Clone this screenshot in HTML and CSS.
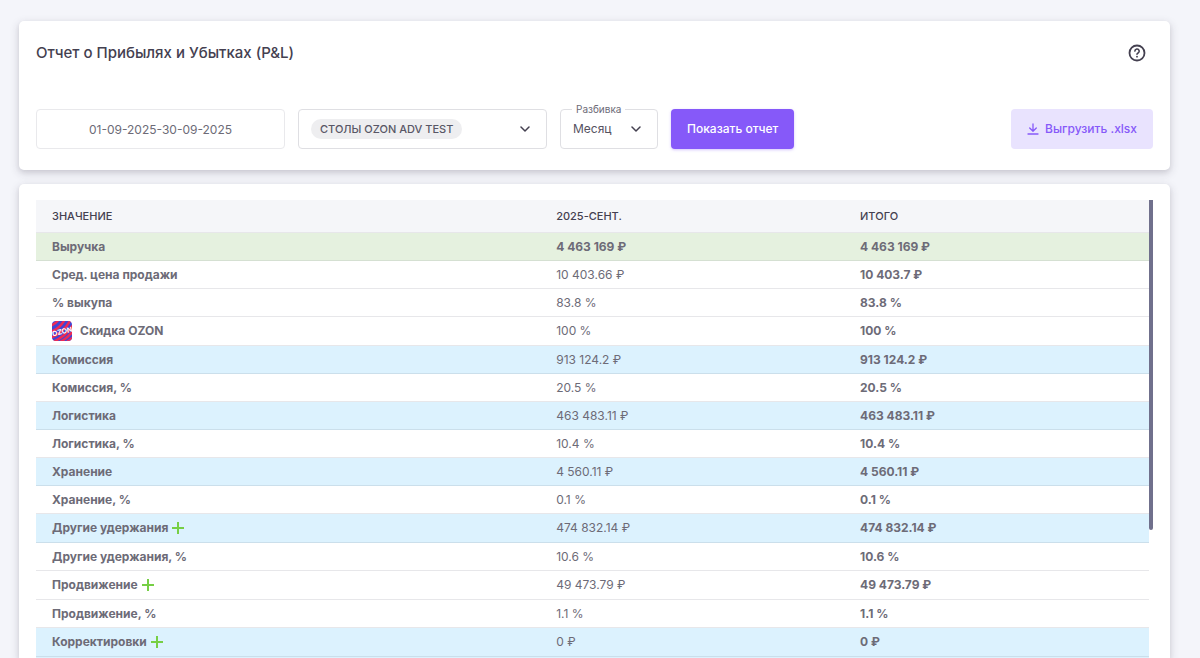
FILE: index.html
```html
<!DOCTYPE html>
<html lang="ru">
<head>
<meta charset="utf-8">
<meta name="viewport" content="width=device-width, initial-scale=1">
<title>Отчет о Прибылях и Убытках (P&amp;L)</title>
<link rel="stylesheet" href="styles.css">
</head>
<body>
<main class="page">
  <section class="card filters">
    <header class="card-head">
      <h1 class="title">Отчет о Прибылях и Убытках (P&amp;L)</h1>
      <button class="help" type="button" aria-label="Справка">
        <svg width="20" height="20" viewBox="0 0 20 20" fill="none" stroke="currentColor" stroke-width="1.8" stroke-linecap="round" stroke-linejoin="round"><circle cx="10" cy="10" r="7.5"/><path d="M7.9 8.1a2.15 2.15 0 1 1 3.2 1.9c-.7.4-1.1.7-1.1 1.3" stroke-width="1.6"/><path d="M10 13.6v.1"/></svg>
      </button>
    </header>
    <form class="controls">
      <input class="field date" type="text" value="01-09-2025-30-09-2025" aria-label="Период">
      <button class="field account" type="button" aria-haspopup="listbox" aria-label="Кабинет: СТОЛЫ OZON ADV TEST">
        <span class="chip">СТОЛЫ OZON ADV TEST</span>
        <svg class="chevron" width="10" height="6" viewBox="0 0 10 6"><path d="M1 1l4 4 4-4"/></svg>
      </button>
      <div class="split">
        <label class="split-label" for="split">Разбивка</label>
        <select class="field split-select" id="split"><option>Месяц</option></select>
        <svg class="chevron split-chevron" width="10" height="6" viewBox="0 0 10 6"><path d="M1 1l4 4 4-4"/></svg>
      </div>
      <button class="btn btn-primary" type="button">Показать отчет</button>
      <button class="btn btn-tonal" type="button">
        <svg width="12" height="12" viewBox="0 0 12 12" fill="none" stroke="currentColor" stroke-width="1.3" stroke-linecap="round" stroke-linejoin="round"><path d="M6 1v7.3M2.7 5L6 8.3 9.300 5M1 11h10"/></svg>
        Выгрузить .xlsx
      </button>
    </form>
  </section>

  <section class="card report">
    <div class="scroll">
      <table class="pnl">
        <thead>
          <tr><th class="col-name" scope="col">Значение</th><th class="col-month" scope="col">2025-сент.</th><th scope="col">Итого</th></tr>
        </thead>
        <tbody>
          <tr class="green"><th scope="row">Выручка</th><td>4 463 169 ₽</td><td>4 463 169 ₽</td></tr>
          <tr><th scope="row">Сред. цена продажи</th><td>10 403.66 ₽</td><td>10 403.7 ₽</td></tr>
          <tr><th scope="row">% выкупа</th><td>83.8 %</td><td>83.8 %</td></tr>
          <tr><th scope="row"><span class="brand">
            <svg width="20" height="20" viewBox="0 0 20 20" aria-hidden="true">
              <defs><clipPath id="tile"><rect width="20" height="20" rx="4"/></clipPath></defs>
              <g clip-path="url(#tile)">
                <rect width="20" height="20" fill="#3f46d6"/>
                <path d="M-2 5Q4 3 7-2M-2 11Q8 8 13-2M-2 17Q12 12 19-2M-1 22Q15 15 23 1M6 22Q17 17 23 7M13 22Q19 19 23 14" fill="none" stroke="#ee2a55" stroke-width="2.500"/>
                <text class="brand-text" x="10" y="13" text-anchor="middle" transform="rotate(-14 10 10)">OZON</text>
              </g>
            </svg>Скидка OZON</span></th><td>100 %</td><td>100 %</td></tr>
          <tr class="blue"><th scope="row">Комиссия</th><td>913 124.2 ₽</td><td>913 124.2 ₽</td></tr>
          <tr><th scope="row">Комиссия, %</th><td>20.5 %</td><td>20.5 %</td></tr>
          <tr class="blue"><th scope="row">Логистика</th><td>463 483.11 ₽</td><td>463 483.11 ₽</td></tr>
          <tr><th scope="row">Логистика, %</th><td>10.4 %</td><td>10.4 %</td></tr>
          <tr class="blue"><th scope="row">Хранение</th><td>4 560.11 ₽</td><td>4 560.11 ₽</td></tr>
          <tr><th scope="row">Хранение, %</th><td>0.1 %</td><td>0.1 %</td></tr>
          <tr class="blue"><th scope="row"><span class="group">Другие удержания<button class="expand" type="button" aria-label="Раскрыть: Другие удержания"></button></span></th><td>474 832.14 ₽</td><td>474 832.14 ₽</td></tr>
          <tr><th scope="row">Другие удержания, %</th><td>10.6 %</td><td>10.6 %</td></tr>
          <tr><th scope="row"><span class="group">Продвижение<button class="expand" type="button" aria-label="Раскрыть: Продвижение"></button></span></th><td>49 473.79 ₽</td><td>49 473.79 ₽</td></tr>
          <tr><th scope="row">Продвижение, %</th><td>1.1 %</td><td>1.1 %</td></tr>
          <tr class="blue"><th scope="row"><span class="group">Корректировки<button class="expand" type="button" aria-label="Раскрыть: Корректировки"></button></span></th><td>0 ₽</td><td>0 ₽</td></tr>
          <tr class="blue"><th></th><td></td><td></td></tr>
        </tbody>
      </table>
      <div class="track"><div class="thumb"></div></div>
    </div>
  </section>
</main>
</body>
</html>
```
FILE: styles.css
```css
* { box-sizing: border-box; }

body {
  margin: 0;
  background: #f4f5fa;
  color: #6d6b77;
  font: 400 12px/20px Inter, "Noto Sans", sans-serif;
}

button, input, select { font: inherit; color: inherit; }
button { cursor: pointer; }

.page {
  display: flex;
  flex-direction: column;
  gap: 14px;
  height: 100vh;
  overflow: hidden;
  padding: 21px 30px 0 19px;
}

.card {
  background: #fff;
  border-radius: 5px;
  box-shadow: 0 3px 9px 1px rgba(47, 43, 61, .15), 0 2px 4px rgba(47, 43, 61, .08);
}

.filters { padding: 20px 17px 21px; }

.card-head {
  display: flex;
  align-items: center;
  justify-content: space-between;
  height: 24px;
  margin-bottom: 44px;
}

.title {
  margin: 0;
  color: #444050;
  font-size: 15px;
  line-height: 24px;
  font-weight: 500;
}

.help {
  display: flex;
  margin-right: 6px;
  padding: 0;
  border: 0;
  background: none;
  color: #444050;
}

.controls { display: flex; gap: 13px; }

.field {
  height: 40px;
  padding: 0 12px;
  border: 1px solid #dfdfe3;
  border-radius: 4px;
  background: #fff;
}

.date {
  flex: 0 1 249px;
  min-width: 0;
  border-color: #e9e9ec;
  text-align: center;
}

.account {
  display: flex;
  flex: 0 1 249px;
  align-items: center;
  justify-content: space-between;
  padding-right: 16px;
}

.chip {
  padding: 0 9px;
  border-radius: 10px;
  background: #eeeef0;
  color: #595766;
  font-size: 11px;
  font-weight: 500;
}

.chevron {
  fill: none;
  stroke: #444050;
  stroke-width: 1.5;
  stroke-linecap: round;
  stroke-linejoin: round;
}

.split { position: relative; flex: 0 0 98px; }

.split-label {
  position: absolute;
  top: -8px;
  left: 12px;
  padding: 0 4px;
  background: #fff;
  font-size: 10px;
  line-height: 16px;
}

.split-select {
  width: 100%;
  padding-right: 28px;
  color: #55525f;
  appearance: none;
}

.split-chevron {
  position: absolute;
  top: 17px;
  right: 17px;
  pointer-events: none;
}

.btn {
  display: flex;
  align-items: center;
  gap: 6px;
  height: 40px;
  padding: 0 16px;
  border: 0;
  border-radius: 4px;
  font-weight: 500;
}

.btn-primary {
  background: #8659f9;
  color: #fff;
  box-shadow: 0 1px 3px rgba(134, 89, 249, .35);
}

.btn-tonal {
  margin-left: auto;
  background: #e9e3fe;
  color: #8659f9;
}

.report {
  flex: 1;
  min-height: 0;
  overflow: hidden;
  border-radius: 5px 5px 0 0;
  padding: 16px 17px 0;
}

.scroll { display: flex; height: 100%; overflow: hidden; align-items: flex-start; }

.pnl {
  flex: 1;
  table-layout: fixed;
  border-spacing: 0;
  text-align: left;
}

.col-name { width: 45.300%; }
.col-month { width: 27.300%; }

.pnl th, .pnl td {
  height: 28px;
  padding: 0 16px;
  border-bottom: 1px solid #e7e7ea;
}

.pnl thead th {
  height: 33px;
  background: #f5f6f9;
  color: #444050;
  font-size: 11px;
  font-weight: 500;
  text-transform: uppercase;
}

.pnl tbody th, .pnl td:last-child, .green td { font-weight: 700; }

.green th, .green td { background: #e5f1df; border-color: #d5e0d2; }
.blue th, .blue td { background: #dcf2fe; border-color: #cbdfeb; }

.brand { display: flex; align-items: center; gap: 8px; height: 28px; }
.brand-text { fill: #fff; font: 700 7px Inter, sans-serif; }

.group { display: flex; align-items: center; gap: 4px; height: 28px; }

.expand {
  width: 12px;
  height: 12px;
  padding: 0;
  border: 0;
  background:
    linear-gradient(#76cf45, #76cf45) center / 12px 2px no-repeat,
    linear-gradient(#76cf45, #76cf45) center / 2px 12px no-repeat;
}

.track { flex: 0 0 4px; height: 100%; }

.thumb {
  height: 72%;
  border-radius: 0 0 2px 2px;
  background: #70708c;
}
```
